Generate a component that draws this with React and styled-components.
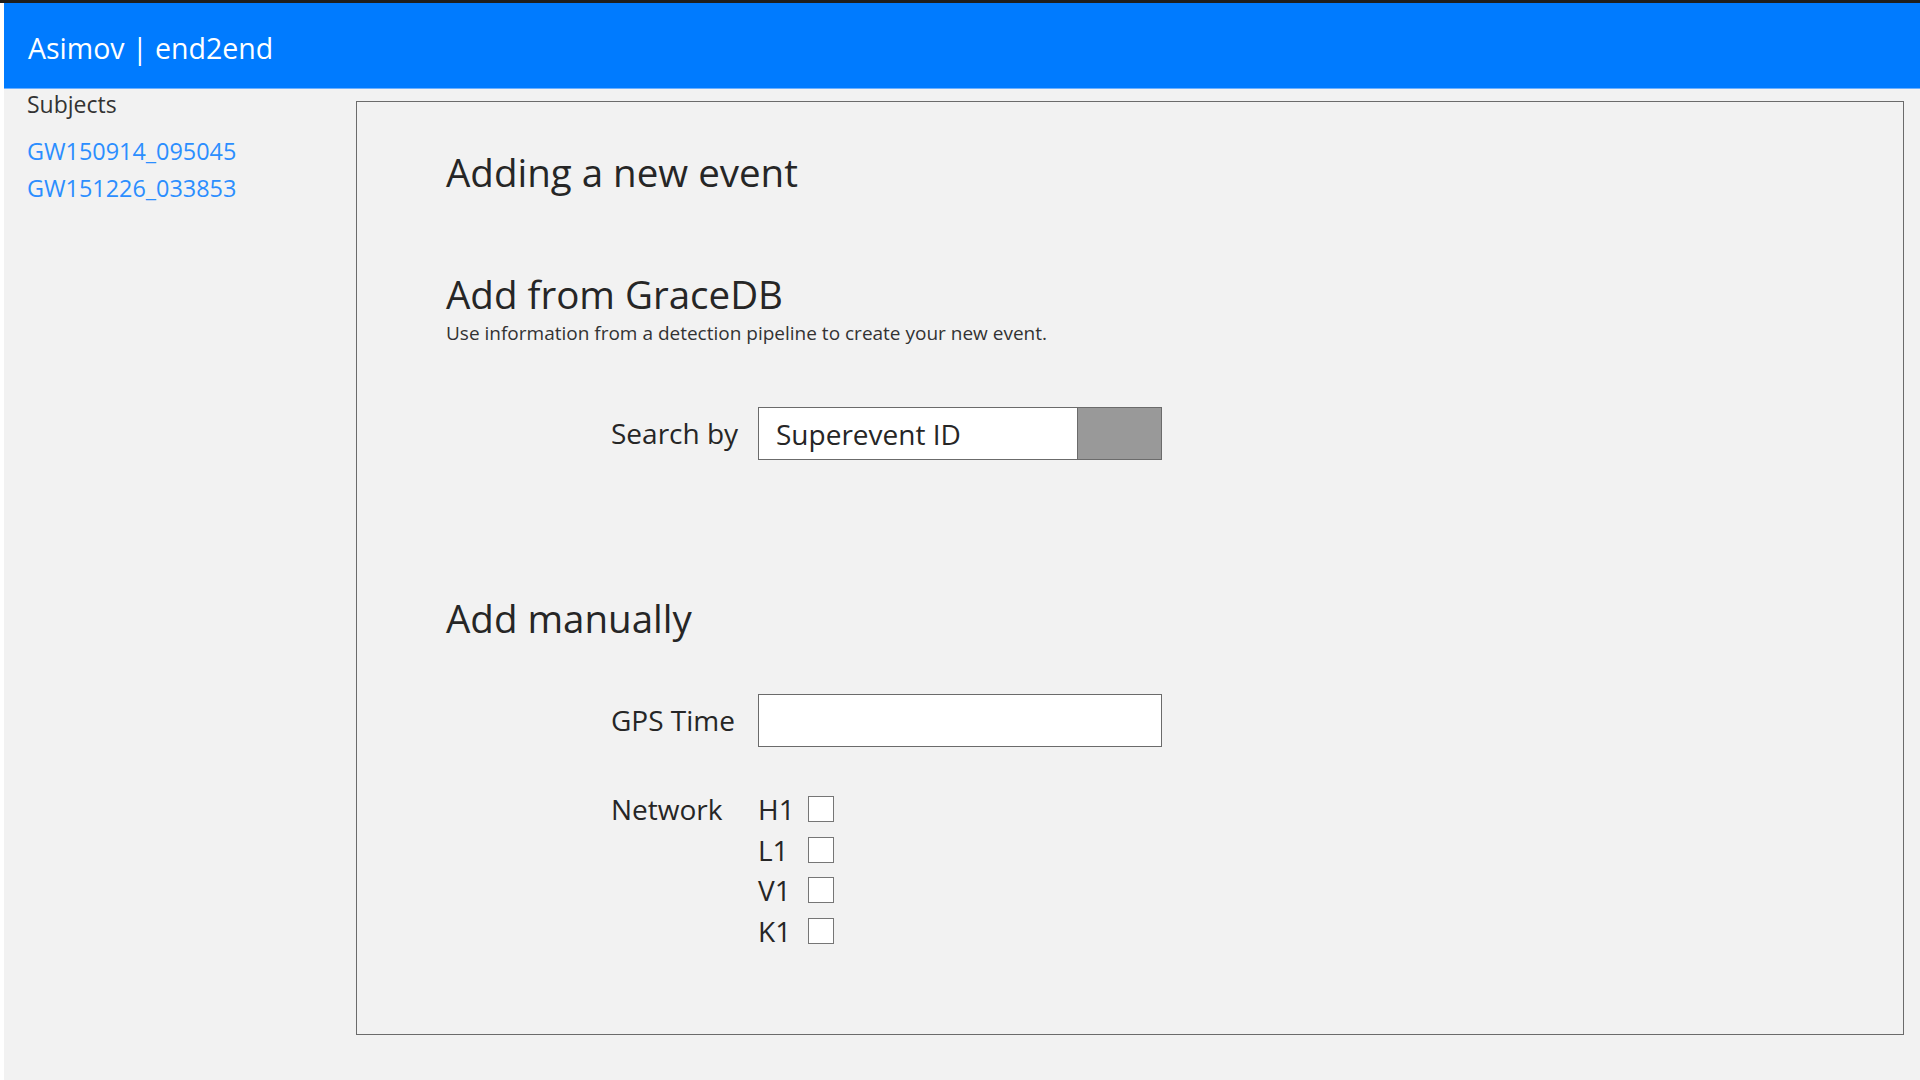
import styled, { createGlobalStyle } from 'styled-components'

const GlobalStyle = createGlobalStyle`
  html, body {
    margin: 0;
    padding: 0;
  }
  body {
    background-color: #f2f2f2;
    border-top: 3px solid #1e1e1e;
    font-family: "Open Sans", "Noto Sans", sans-serif;
    color: #262626;
  }
  * {
    box-sizing: border-box;
  }
`

const Page = styled.div`
  display: flex;
  flex-direction: column;
  height: calc(100vh - 3px);
  border-left: 4px solid #ffffff;
`

const Header = styled.header`
  display: flex;
  align-items: center;
  height: 86px;
  padding: 5px 0 0 24px;
  background-color: #007bff;
  border-bottom: 1px solid #6cb0ff;
  color: #ffffff;
  font-size: 28.5px;
  flex-shrink: 0;
`

const Body = styled.div`
  display: flex;
  flex: 1;
  min-height: 0;
`

const Sidebar = styled.nav`
  width: 352px;
  padding: 0 23px;
  flex-shrink: 0;
`

const SidebarTitle = styled.div`
  font-size: 23px;
  line-height: 37px;
  color: #333;
  margin-top: -3px;
  margin-bottom: 10px;
`

const SubjectLink = styled.a`
  display: block;
  font-size: 23.4px;
  line-height: 37px;
  color: #2b8eff;
  text-decoration: none;
`

const Main = styled.main`
  flex: 1;
  padding: 12px 16px 45px 0;
  display: flex;
`

const Panel = styled.section`
  flex: 1;
  border: 1px solid #6b6b6b;
  padding: 46px 89px;
`

const Heading = styled.h2`
  margin: 0;
  margin-top: ${(p) => p.$gap || 0}px;
  font-size: 38.5px;
  line-height: 48px;
  font-weight: normal;
  color: #262626;
`

const Lead = styled.p`
  margin: 3px 0 0;
  font-size: 19px;
  line-height: 24px;
  color: #333;
`

const FormRow = styled.div`
  display: flex;
  align-items: ${(p) => (p.$top ? 'flex-start' : 'center')};
  margin-top: ${(p) => p.$gap}px;
  padding-left: 165px;
`

const Label = styled.label`
  flex: 0 0 147px;
  white-space: nowrap;
  font-size: 28px;
  line-height: 41px;
  color: #262626;
`

const InputGroup = styled.div`
  display: flex;
  width: 404px;
  height: 53px;
  border: 1px solid #6b6b6b;
  background-color: #ffffff;
`

const TextInput = styled.input`
  flex: 1;
  min-width: 0;
  border: none;
  outline: none;
  background: #ffffff;
  padding: 0 17px;
  font-family: inherit;
  font-size: 28px;
  color: #262626;
`

const GreyButton = styled.button`
  width: 84px;
  border: none;
  border-left: 1px solid #6b6b6b;
  background-color: #999999;
  cursor: pointer;
`

const CheckList = styled.div`
  display: flex;
  flex-direction: column;
`

const CheckItem = styled.label`
  display: flex;
  align-items: center;
  height: 40.5px;
  font-size: 28px;
  color: #262626;
`

const CheckName = styled.span`
  width: 50px;
`

const Box = styled.input.attrs({ type: 'checkbox' })`
  appearance: none;
  margin: 0;
  width: 26px;
  height: 26px;
  border: 1px solid #767676;
  background-color: #ffffff;
`

const subjects = ['GW150914_095045', 'GW151226_033853']
const detectors = ['H1', 'L1', 'V1', 'K1']

const App = () => {
  return (
    <Page>
      <GlobalStyle />
      <Header>Asimov | end2end</Header>
      <Body>
        <Sidebar>
          <SidebarTitle>Subjects</SidebarTitle>
          {subjects.map((s) => (
            <SubjectLink key={s} href="#">{s}</SubjectLink>
          ))}
        </Sidebar>
        <Main>
          <Panel>
            <Heading>Adding a new event</Heading>
            <Heading $gap={74}>Add from GraceDB</Heading>
            <Lead>Use information from a detection pipeline to create your new event.</Lead>
            <FormRow $gap={62}>
              <Label>Search by</Label>
              <InputGroup>
                <TextInput defaultValue="Superevent ID" />
                <GreyButton />
              </InputGroup>
            </FormRow>
            <Heading $gap={134}>Add manually</Heading>
            <FormRow $gap={52}>
              <Label>GPS Time</Label>
              <InputGroup>
                <TextInput />
              </InputGroup>
            </FormRow>
            <FormRow $gap={42} $top>
              <Label>Network</Label>
              <CheckList>
                {detectors.map((d) => (
                  <CheckItem key={d}>
                    <CheckName>{d}</CheckName>
                    <Box />
                  </CheckItem>
                ))}
              </CheckList>
            </FormRow>
          </Panel>
        </Main>
      </Body>
    </Page>
  )
}

export default App
